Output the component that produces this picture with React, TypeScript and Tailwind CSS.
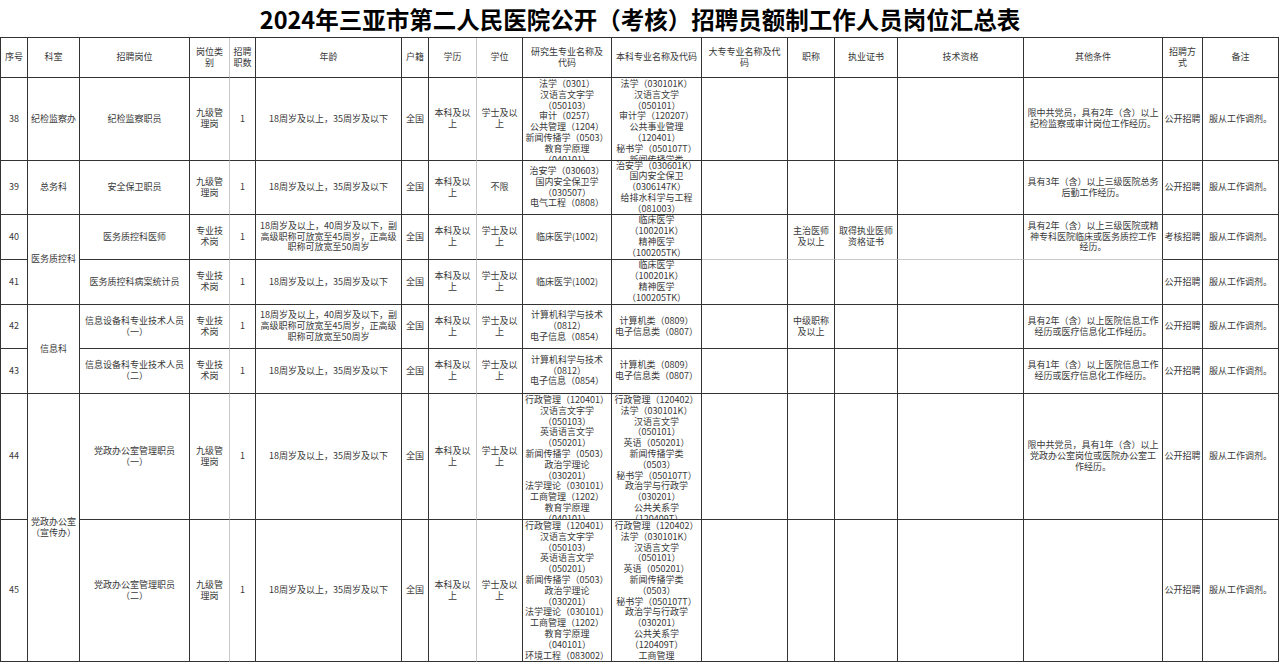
import clsx from "clsx"

type CellDef = {
  t: string[]
  rs?: boolean
  top?: boolean
  lr?: boolean
  lb?: boolean
}

const c = (t: string[], o: Partial<CellDef> = {}): CellDef => ({ t, ...o })

const AGE35 = ["18周岁及以上，35周岁及以下"]
const AGE40 = ["18周岁及以上，40周岁及以下，副", "高级职称可放宽至45周岁，正高级", "职称可放宽至50周岁"]
const EDU = ["本科及以", "上"]
const DEG = ["学士及以", "上"]
const OK = "服从工作调剂。"

const PG38 = ["法学（0301）", "汉语言文字学", "（050103）", "审计（0257）", "公共管理（1204）", "新闻传播学（0503）", "教育学原理", "（040101）"]
const UG38 = ["法学（030101K）", "汉语言文学", "（050101）", "审计学（120207）", "公共事业管理", "（120401）", "秘书学（050107T）", "新闻传播学类"]
const MED = ["临床医学", "（100201K）", "精神医学", "（100205TK）"]
const PGIT = ["计算机科学与技术", "（0812）", "电子信息（0854）"]
const UGIT = ["计算机类（0809）", "电子信息类（0807）"]
const PG44 = ["行政管理（120401）", "汉语言文字学", "（050103）", "英语语言文学", "（050201）", "新闻传播学（0503）", "政治学理论", "（030201）", "法学理论（030101）", "工商管理（1202）", "教育学原理", "（040101）"]
const UG44 = ["行政管理（120402）", "法学（030101K）", "汉语言文学", "（050101）", "英语（050201）", "新闻传播学类", "（0503）", "秘书学（050107T）", "政治学与行政学", "（030201）", "公共关系学", "（120409T）"]
const PG45 = [...PG44, "环境工程（083002）"]
const UG45 = [...UG44, "工商管理"]

const header: CellDef[] = [
  c(["序号"]), c(["科室"]), c(["招聘岗位"]), c(["岗位类", "别"], { lr: true }), c(["招聘", "职数"]),
  c(["年龄"]), c(["户籍"]), c(["学历"], { lr: true }), c(["学位"]),
  c(["研究生专业名称及", "代码"]), c(["本科专业名称及代码"]), c(["大专专业名称及代", "码"]),
  c(["职称"]), c(["执业证书"]), c(["技术资格"]), c(["其他条件"]), c(["招聘方", "式"]), c(["备注"]),
]

const rows: CellDef[][] = [
  [
    c(["38"]), c(["纪检监察办"]), c(["纪检监察职员"]), c(["九级管", "理岗"], { lr: true }), c(["1"]),
    c(AGE35), c(["全国"]), c(EDU, { lr: true }), c(DEG), c(PG38, { top: true }), c(UG38, { top: true }),
    c([]), c([]), c([]), c([]),
    c(["限中共党员，具有2年（含）以上", "纪检监察或审计岗位工作经历。"]), c(["公开招聘"]), c([OK]),
  ],
  [
    c(["39"]), c(["总务科"]), c(["安全保卫职员"]), c(["九级管", "理岗"], { lr: true }), c(["1"]),
    c(AGE35), c(["全国"]), c(EDU, { lr: true }), c(["不限"]),
    c(["治安学（030603）", "国内安全保卫学", "（030507）", "电气工程（0808）"]),
    c(["治安学（030601K）", "国内安全保卫", "（0306147K）", "给排水科学与工程", "（081003）"]),
    c([]), c([]), c([]), c([]),
    c(["具有3年（含）以上三级医院总务", "后勤工作经历。"]), c(["公开招聘"]), c([OK]),
  ],
  [
    c(["40"]), c(["医务质控科"], { rs: true }), c(["医务质控科医师"]), c(["专业技", "术岗"], { lr: true }), c(["1"]),
    c(AGE40), c(["全国"]), c(EDU, { lr: true }), c(DEG), c(["临床医学(1002)"]), c(MED),
    c([], { lb: true }), c(["主治医师", "及以上"], { lb: true }), c(["取得执业医师", "资格证书"], { lb: true }), c([], { lb: true }),
    c(["具有2年（含）以上三级医院或精", "神专科医院临床或医务质控工作", "经历。"], { lb: true }), c(["考核招聘"]), c([OK]),
  ],
  [
    c(["41"]), c(["医务质控科病案统计员"]), c(["专业技", "术岗"], { lr: true }), c(["1"]),
    c(AGE35), c(["全国"]), c(EDU, { lr: true }), c(DEG), c(["临床医学(1002)"]), c(MED),
    c([]), c([]), c([]), c([]), c([]), c(["公开招聘"]), c([OK]),
  ],
  [
    c(["42"]), c(["信息科"], { rs: true }), c(["信息设备科专业技术人员", "（一）"]), c(["专业技", "术岗"], { lr: true }), c(["1"]),
    c(AGE40), c(["全国"]), c(EDU, { lr: true }), c(DEG), c(PGIT), c(UGIT),
    c([]), c(["中级职称", "及以上"]), c([]), c([]),
    c(["具有2年（含）以上医院信息工作", "经历或医疗信息化工作经历。"]), c(["公开招聘"]), c([OK]),
  ],
  [
    c(["43"]), c(["信息设备科专业技术人员", "（二）"]), c(["专业技", "术岗"], { lr: true }), c(["1"]),
    c(AGE35), c(["全国"]), c(EDU, { lr: true }), c(DEG), c(PGIT), c(UGIT),
    c([]), c([]), c([]), c([]),
    c(["具有1年（含）以上医院信息工作", "经历或医疗信息化工作经历。"]), c(["公开招聘"]), c([OK]),
  ],
  [
    c(["44"]), c(["党政办公室", "（宣传办）"], { rs: true }), c(["党政办公室管理职员", "（一）"]), c(["九级管", "理岗"], { lr: true }), c(["1"]),
    c(AGE35), c(["全国"]), c(EDU, { lr: true }), c(DEG), c(PG44, { top: true }), c(UG44, { top: true }),
    c([]), c([]), c([]), c([]),
    c(["限中共党员，具有1年（含）以上", "党政办公室岗位或医院办公室工", "作经历。"]), c(["公开招聘"]), c([OK]),
  ],
  [
    c(["45"]), c(["党政办公室管理职员", "（二）"]), c(["九级管", "理岗"], { lr: true }), c(["1"]),
    c(AGE35), c(["全国"]), c(EDU, { lr: true }), c(DEG), c(PG45, { top: true }), c(UG45, { top: true }),
    c([]), c([]), c([]), c([]), c([]), c(["公开招聘"]), c([OK]),
  ],
]

function Cell({ d }: { d: CellDef }) {
  return (
    <div
      className={clsx(
        "flex flex-col items-center overflow-hidden border-b border-r text-center",
        d.top ? "justify-start pt-px" : "justify-center",
        d.lr ? "border-r-[#c8c8c8]" : "border-r-[#333]",
        d.lb ? "border-b-[#c8c8c8]" : "border-b-[#333]",
        d.rs && "row-span-2"
      )}
    >
      {d.t.map((line, i) => (
        <div key={i} className="whitespace-nowrap">
          {line}
        </div>
      ))}
    </div>
  )
}

export default function App() {
  return (
    <div className="h-[662px] w-[1280px] overflow-hidden bg-white font-['Noto_Sans_CJK_SC',sans-serif] text-[#383838]">
      <div className="flex h-[37px] items-center justify-center pt-[2px] text-[23.5px] font-bold leading-none text-black">
        2024年三亚市第二人民医院公开（考核）招聘员额制工作人员岗位汇总表
      </div>
      <div className="grid w-[1279px] grid-cols-[27px_52px_110px_40px_26px_146px_27px_48px_46px_89px_90px_86px_47px_63px_126px_139px_40px_76px] grid-rows-[40px_83px_54px_45px_45px_44px_45px_126px_142px] border-l border-t border-[#333] text-[9px] leading-[10.8px]">
        {header.map((d, i) => (
          <Cell key={"h" + i} d={d} />
        ))}
        {rows.map((r, ri) => r.map((d, i) => <Cell key={ri + "-" + i} d={d} />))}
      </div>
    </div>
  )
}
